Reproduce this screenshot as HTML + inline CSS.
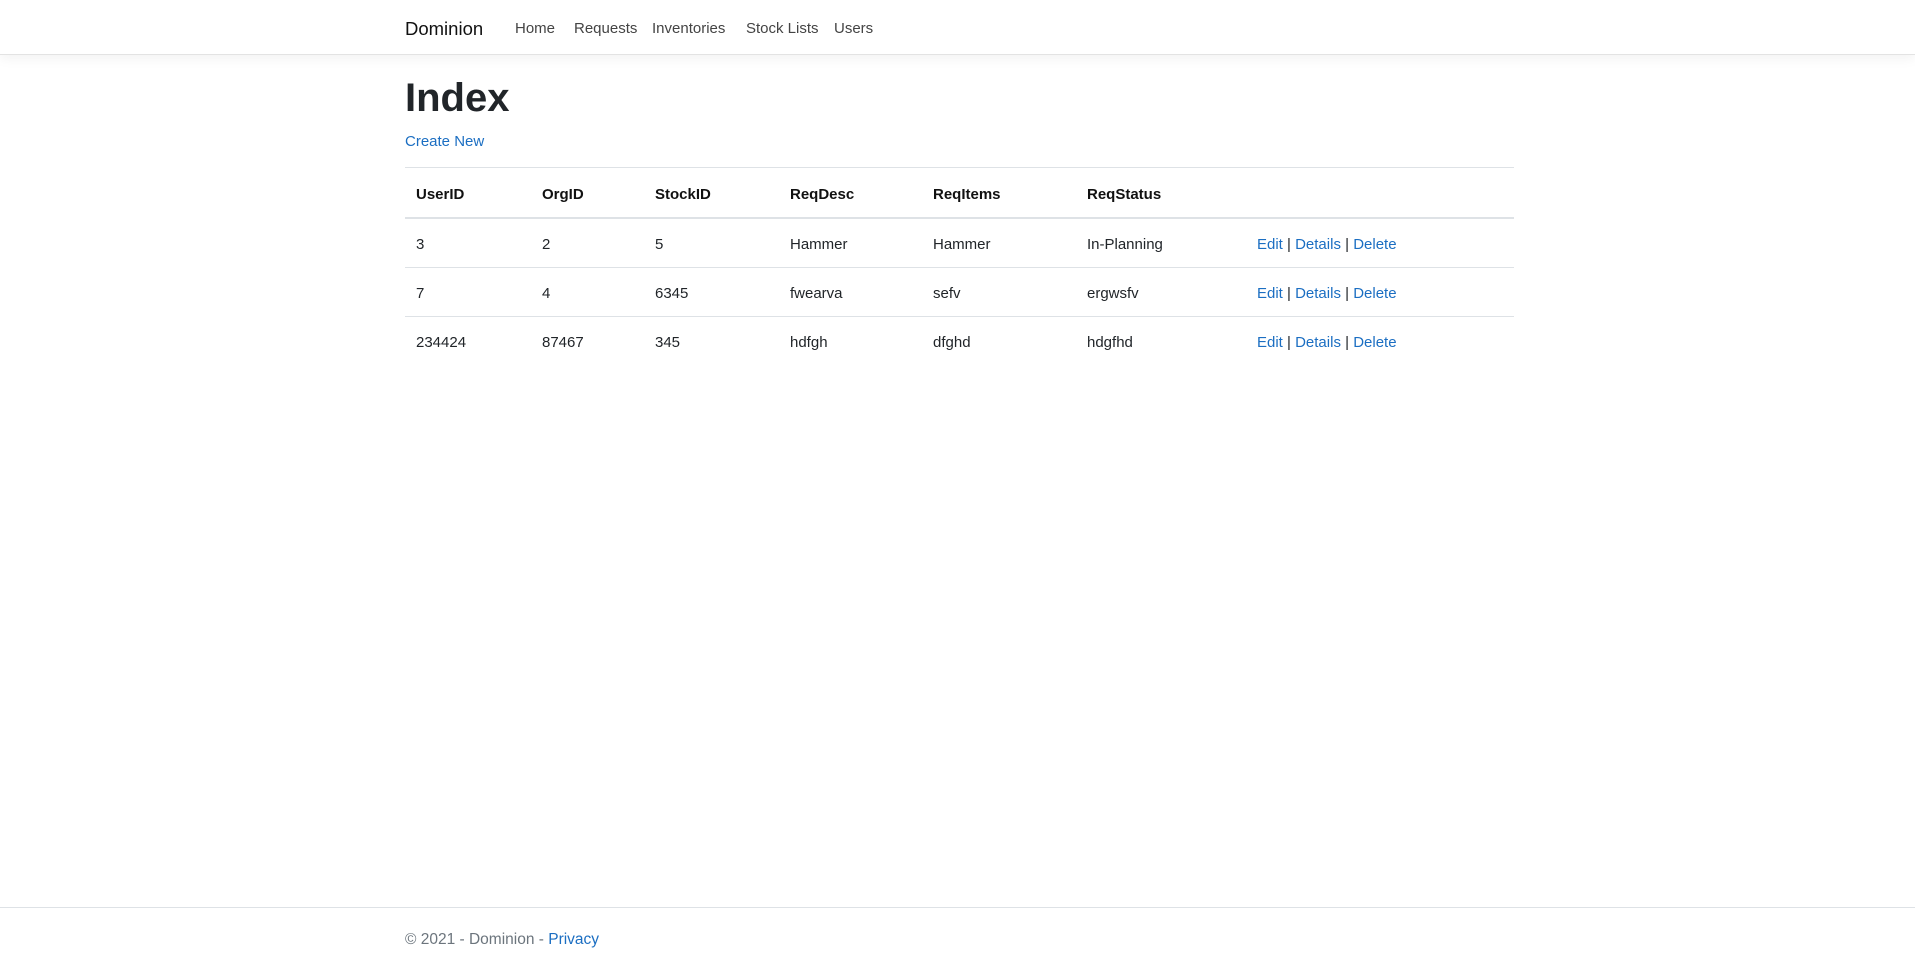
<!DOCTYPE html>
<html><head><meta charset="utf-8"><style>
*{box-sizing:border-box;margin:0;padding:0}
html,body{width:1915px;height:965px;overflow:hidden;background:#fff;font-family:"Liberation Sans",sans-serif;color:#212529;font-size:15px}
a{color:#1b6ec2;text-decoration:none}
.nav{position:absolute;left:0;top:0;width:1915px;height:55px;border-bottom:1px solid #e3e3e3;box-shadow:0 .25rem .75rem rgba(0,0,0,.05)}
.abs{position:absolute;white-space:nowrap}
.brand{left:405px;top:18px;font-size:18.5px;color:#111}
.nl{top:20px;font-size:15px;color:#444}
h1{position:absolute;left:405px;top:76px;font-size:40px;font-weight:bold;color:#212529}
.hl{position:absolute;left:405px;width:1109px;height:1px;background:#dee2e6}
.cell{position:absolute;font-size:15px}
.th{font-weight:bold;font-size:15px;color:#111}
.foot{left:405px;top:931px;font-size:15.5px;color:#6c757d}
</style></head><body>
<div class="nav"></div>
<div class="abs brand">Dominion</div>
<div class="abs nl" style="left:515px">Home</div>
<div class="abs nl" style="left:574px">Requests</div>
<div class="abs nl" style="left:652px">Inventories</div>
<div class="abs nl" style="left:746px">Stock Lists</div>
<div class="abs nl" style="left:834px">Users</div>
<h1>Index</h1>
<a class="abs" style="left:405px;top:133px;font-size:15px">Create New</a>
<div class="hl" style="top:167px"></div>
<div class="hl" style="top:217px;height:2px"></div>
<div class="hl" style="top:267px"></div>
<div class="hl" style="top:316px"></div>

<div class="cell abs th" style="left:416px;top:186px">UserID</div>
<div class="cell abs th" style="left:542px;top:186px">OrgID</div>
<div class="cell abs th" style="left:655px;top:186px">StockID</div>
<div class="cell abs th" style="left:790px;top:186px">ReqDesc</div>
<div class="cell abs th" style="left:933px;top:186px">ReqItems</div>
<div class="cell abs th" style="left:1087px;top:186px">ReqStatus</div>

<div class="cell abs" style="left:416px;top:236px">3</div>
<div class="cell abs" style="left:542px;top:236px">2</div>
<div class="cell abs" style="left:655px;top:236px">5</div>
<div class="cell abs" style="left:790px;top:236px">Hammer</div>
<div class="cell abs" style="left:933px;top:236px">Hammer</div>
<div class="cell abs" style="left:1087px;top:236px">In-Planning</div>
<div class="cell abs" style="left:1257px;top:236px"><a>Edit</a> | <a>Details</a> | <a>Delete</a></div>

<div class="cell abs" style="left:416px;top:285px">7</div>
<div class="cell abs" style="left:542px;top:285px">4</div>
<div class="cell abs" style="left:655px;top:285px">6345</div>
<div class="cell abs" style="left:790px;top:285px">fwearva</div>
<div class="cell abs" style="left:933px;top:285px">sefv</div>
<div class="cell abs" style="left:1087px;top:285px">ergwsfv</div>
<div class="cell abs" style="left:1257px;top:285px"><a>Edit</a> | <a>Details</a> | <a>Delete</a></div>

<div class="cell abs" style="left:416px;top:334px">234424</div>
<div class="cell abs" style="left:542px;top:334px">87467</div>
<div class="cell abs" style="left:655px;top:334px">345</div>
<div class="cell abs" style="left:790px;top:334px">hdfgh</div>
<div class="cell abs" style="left:933px;top:334px">dfghd</div>
<div class="cell abs" style="left:1087px;top:334px">hdgfhd</div>
<div class="cell abs" style="left:1257px;top:334px"><a>Edit</a> | <a>Details</a> | <a>Delete</a></div>

<div style="position:absolute;left:0;top:907px;width:1915px;height:1px;background:#dee2e6"></div>
<div class="abs foot">© 2021 - Dominion - <a>Privacy</a></div>
</body></html>
